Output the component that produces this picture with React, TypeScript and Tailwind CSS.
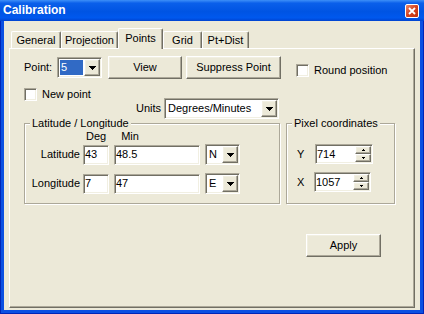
const raised =
  "border border-t-white border-l-white border-r-[#716f64] border-b-[#716f64] bg-[#ece9d8] shadow-[inset_-1px_-1px_0_#aca899,inset_1px_1px_0_#f1efe2]";
const sunken =
  "border border-t-[#aca899] border-l-[#aca899] border-r-white border-b-white bg-white shadow-[inset_1px_1px_0_#716f64,inset_-1px_-1px_0_#f1efe2]";
const etched = "border border-[#aca899] shadow-[inset_1px_1px_0_#fff,1px_1px_0_#fff]";

const tabs = [
  { label: "General", w: "w-[50px]" },
  { label: "Projection", w: "w-[57px]" },
  { label: "Points", w: "w-[45px]", active: true },
  { label: "Grid", w: "w-[39px]" },
  { label: "Pt+Dist", w: "w-[47px]" },
];

function DownArrow() {
  return (
    <svg width="7" height="4" viewBox="0 0 7 4" shapeRendering="crispEdges">
      <path d="M0 0H7V1H6V2H5V3H4V4H3V3H2V2H1V1H0Z" fill="#000" />
    </svg>
  );
}

function SpinArrow({ up }: { up?: boolean }) {
  return (
    <svg width="3" height="2" viewBox="0 0 3 2" shapeRendering="crispEdges">
      <path d={up ? "M1 0H2V1H3V2H0V1H1Z" : "M0 0H3V1H2V2H1V1H0Z"} fill="#000" />
    </svg>
  );
}

function Combo({ value, className, selected }: { value: string; className: string; selected?: boolean }) {
  return (
    <div className={`${sunken} ${className} flex h-[21px] p-px`}>
      <div className="flex flex-1 items-center p-px">
        {selected ? (
          <span className="flex h-full w-full items-center bg-[#316ac5] pl-px text-white">{value}</span>
        ) : (
          <span className="pl-px">{value}</span>
        )}
      </div>
      <div className={`${raised} flex w-[16px] items-center justify-center`}>
        <DownArrow />
      </div>
    </div>
  );
}

function Field({ value, className }: { value: string; className: string }) {
  return <div className={`${sunken} ${className} flex h-[20px] items-center pl-px`}>{value}</div>;
}

function Spin({ value, className }: { value: string; className: string }) {
  return (
    <div className={`${sunken} ${className} flex h-[20px] p-px`}>
      <div className="flex flex-1 items-center">{value}</div>
      <div className="flex w-[16px] flex-col">
        <div className={`${raised} flex h-[8px] items-center justify-center`}>
          <SpinArrow up />
        </div>
        <div className={`${raised} flex h-[8px] items-center justify-center`}>
          <SpinArrow />
        </div>
      </div>
    </div>
  );
}

function Check({ label }: { label: string }) {
  return (
    <div className="flex items-center gap-[5px]">
      <div className={`${sunken} h-[13px] w-[13px]`} />
      <span>{label}</span>
    </div>
  );
}

function Button({ label, className }: { label: string; className: string }) {
  return <div className={`${raised} ${className} flex h-[23px] items-center justify-center`}>{label}</div>;
}

export default function App() {
  return (
    <div className="flex h-[314px] w-[424px] flex-col border-x border-b border-[#0026b8] bg-[#0b50e2] font-['Liberation_Sans',Arial,sans-serif] text-[11px] leading-[13px] text-black">
      <div className="-mx-px flex h-[21px] items-center justify-between bg-[linear-gradient(to_bottom,#3d8ff8_0%,#0a5fea_15%,#0054e3_55%,#0058ee_85%,#0043cf_100%)] pl-[3px] pr-[5px]">
        <span className="text-[12px] font-bold text-white">Calibration</span>
        <div className="flex h-[14px] w-[14px] items-center justify-center rounded-[2px] border border-white bg-[linear-gradient(135deg,#ec8a6c,#d5421e_50%,#c0300c)]">
          <svg width="8" height="8" viewBox="0 0 8 8">
            <path d="M1 1L7 7M7 1L1 7" stroke="#fff" strokeWidth="1.8" />
          </svg>
        </div>
      </div>

      <div className="mx-[3px] mb-[3px] flex flex-1 flex-col bg-[#ece9d8] px-[5px] pb-[2px] pt-[7px]">
        <div className="ml-[2px] flex h-[20px] items-start">
          {tabs.map((t) =>
            t.active ? (
              <div
                key={t.label}
                className={`${t.w} relative z-10 -mb-px flex h-[21px] justify-center rounded-t-[2px] border-l border-r border-t border-l-white border-t-white border-r-[#716f64] bg-[#ece9d8] pt-[3px] shadow-[inset_-1px_0_0_#aca899]`}
              >
                {t.label}
              </div>
            ) : (
              <div
                key={t.label}
                className={`${t.w} mt-[3px] flex h-[17px] justify-center rounded-t-[2px] border-l border-r border-t border-l-white border-t-white border-r-[#716f64] pt-[2px] shadow-[inset_-1px_0_0_#aca899]`}
              >
                {t.label}
              </div>
            )
          )}
        </div>

        <div className="flex flex-1 flex-col border border-b-[#716f64] border-l-white border-r-[#716f64] border-t-white pl-[14px] pt-[7px] shadow-[inset_-1px_-1px_0_#aca899]">
          <div className="flex h-[23px] items-center">
            <span className="w-[33px]">Point:</span>
            <Combo value="5" className="w-[45px]" selected />
            <Button label="View" className="ml-[6px] w-[74px]" />
            <Button label="Suppress Point" className="ml-[4px] w-[95px]" />
            <div className="ml-[15px] mt-[8px] self-start">
              <Check label="Round position" />
            </div>
          </div>

          <div className="mt-[9px]">
            <Check label="New point" />
          </div>

          <div className="-mt-[3px] ml-[112px] flex items-center gap-[3px]">
            <span>Units</span>
            <Combo value="Degrees/Minutes" className="w-[115px]" />
          </div>

          <div className="mt-[4px] flex items-start">
            <div className={`${etched} flex h-[81px] w-[256px] flex-col`}>
              <span className="-mt-[7px] ml-[5px] w-fit bg-[#ece9d8] px-[2px]">Latitude / Longitude</span>
              <div className="flex pl-[61px]">
                <span>Deg</span>
                <span className="ml-[15px]">Min</span>
              </div>
              <div className="mt-px flex items-center">
                <span className="w-[55px] text-right">Latitude</span>
                <Field value="43" className="ml-[3px] w-[26px]" />
                <Field value="48.5" className="ml-[5px] w-[86px]" />
                <Combo value="N" className="ml-[5px] w-[35px]" />
              </div>
              <div className="mt-[8px] flex items-center">
                <span className="w-[55px] text-right">Longitude</span>
                <Field value="7" className="ml-[3px] w-[26px]" />
                <Field value="47" className="ml-[5px] w-[86px]" />
                <Combo value="E" className="ml-[5px] w-[35px]" />
              </div>
            </div>

            <div className={`${etched} ml-[6px] flex h-[81px] w-[109px] flex-col`}>
              <span className="-mt-[7px] ml-[5px] w-fit bg-[#ece9d8] px-[2px]">Pixel coordinates</span>
              <div className="mt-[14px] flex items-center pl-[10px]">
                <span className="w-[18px]">Y</span>
                <Spin value="714" className="w-[58px]" />
              </div>
              <div className="mt-[8px] flex items-center pl-[10px]">
                <span className="w-[17px]">X</span>
                <Spin value="1057" className="w-[57px]" />
              </div>
            </div>
          </div>

          <Button label="Apply" className="ml-[282px] mt-[30px] w-[75px]" />
        </div>
      </div>
    </div>
  );
}
